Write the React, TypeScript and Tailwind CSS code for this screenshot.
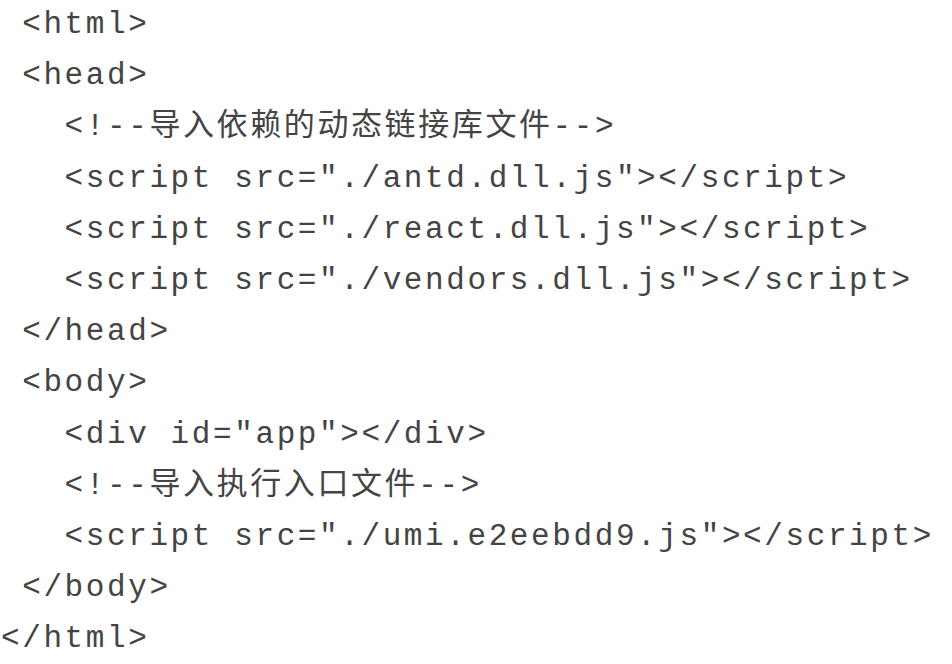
import React from 'react'

const lines = [
    ' <html>',
    ' <head>',
    '   <!--导入依赖的动态链接库文件-->',
    '   <script src="./antd.dll.js"></script>',
    '   <script src="./react.dll.js"></script>',
    '   <script src="./vendors.dll.js"></script>',
    ' </head>',
    ' <body>',
    '   <div id="app"></div>',
    '   <!--导入执行入口文件-->',
    '   <script src="./umi.e2eebdd9.js"></script>',
    ' </body>',
    '</html>',
]

const App = () => {
    return (
        <div className="w-[952px] h-[664px] bg-white overflow-hidden">
            <pre className="-mt-[1px] pl-[1px] font-['Liberation_Mono','Noto_Sans_CJK_SC',monospace] text-[31px] leading-[51.2px] tracking-[2.6px] text-[#444]">
                {lines.map((line, i) => (
                    <div key={i} className="whitespace-pre">{line}</div>
                ))}
            </pre>
        </div>
    )
}

export default App
